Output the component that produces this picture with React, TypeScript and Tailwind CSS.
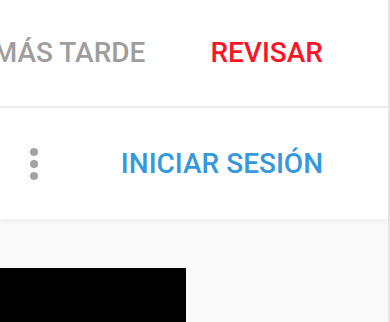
import { MoreVertical } from 'lucide-react';

const font = { fontFamily: 'Roboto, "Noto Sans", sans-serif' };

export default function App() {
  return (
    <div className="flex h-[322px] w-[390px] overflow-hidden bg-[#f9f9f9]" style={font}>
      <div className="flex min-w-0 flex-1 flex-col">
        {/* Dialog actions */}
        <div className="flex h-[108px] shrink-0 items-center justify-end gap-[65px] border-b-2 border-[#ececec] bg-white pr-[65px] text-[28px] font-medium leading-none">
          <span className="whitespace-nowrap text-[#9e9e9e]">MÁS TARDE</span>
          <span className="whitespace-nowrap text-[#fc1426]">REVISAR</span>
        </div>

        {/* Account row */}
        <div className="relative z-10 flex h-[111px] shrink-0 items-center justify-between bg-white pl-[30px] pr-[65px] shadow-[0_2px_6px_rgba(0,0,0,0.05)]">
          <div className="flex flex-col gap-[4px]">
            <span className="h-[8px] w-[8px] rounded-full bg-[#a3a3a3]" />
            <span className="h-[8px] w-[8px] rounded-full bg-[#a3a3a3]" />
            <span className="h-[8px] w-[8px] rounded-full bg-[#a3a3a3]" />
          </div>
          <span className="whitespace-nowrap text-[28px] font-medium leading-none text-[#3498e0]">
            INICIAR SESIÓN
          </span>
        </div>

        <div className="flex-1 pt-[49px]">
          <div className="h-full w-[186px] bg-black" />
        </div>
      </div>
      <div className="w-[2px] shrink-0 bg-[#e6e6e6]" />
    </div>
  );
}
